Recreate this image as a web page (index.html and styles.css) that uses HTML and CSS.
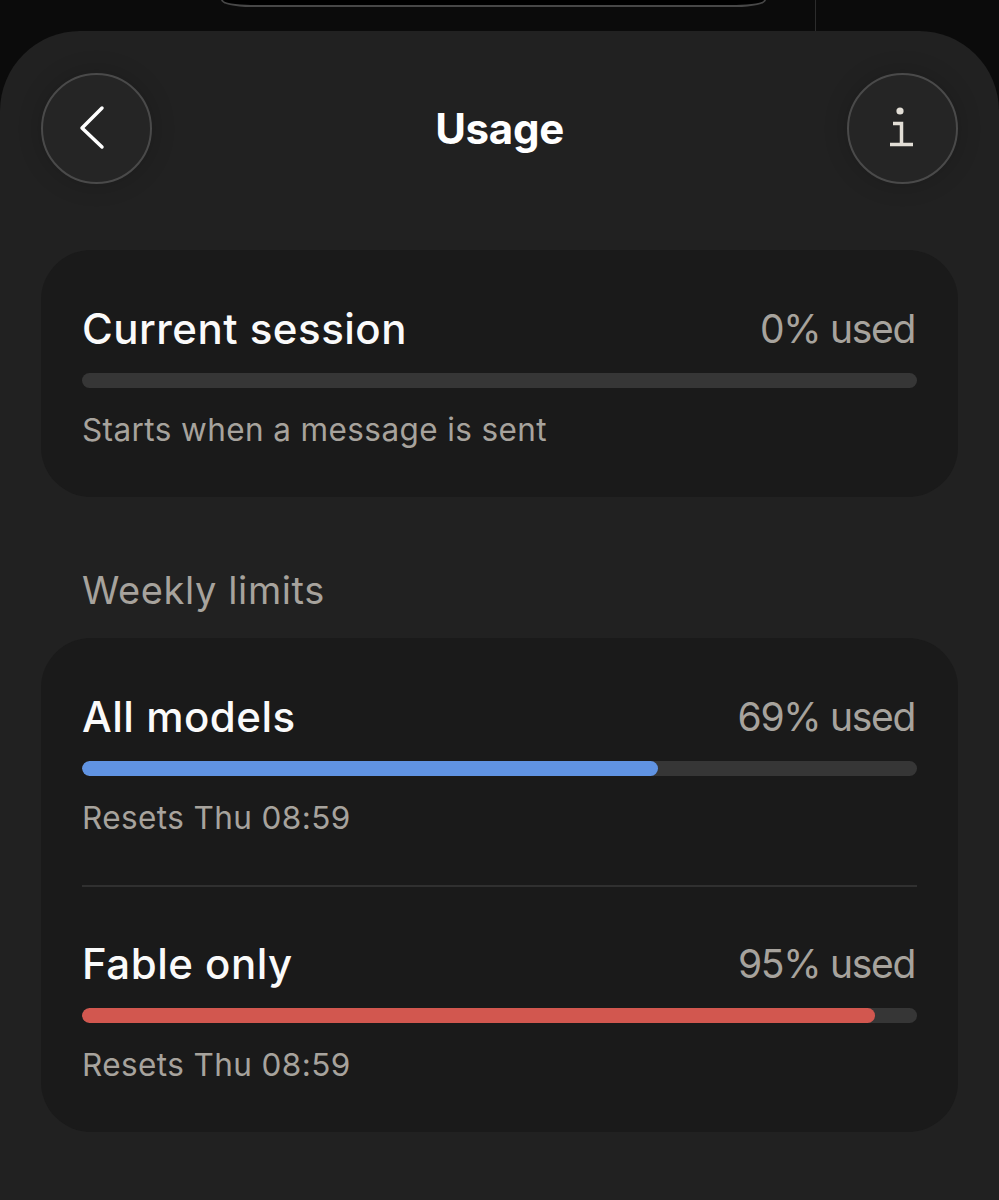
FILE: index.html
```html
<!DOCTYPE html>
<html lang="en">
<head>
  <meta charset="UTF-8">
  <meta name="viewport" content="width=device-width, initial-scale=1.0">
  <title>Usage</title>
  <link rel="stylesheet" href="styles.css">
</head>
<body>
  <div class="statusbar">
    <div class="island"></div>
    <div class="glare"></div>
  </div>

  <main class="sheet">
    <header class="topbar">
      <button class="round-btn" aria-label="Back">
        <svg viewBox="0 0 111 111" width="111" height="111">
          <polyline points="61,35 41,55 61,74" fill="none" stroke="#fff" stroke-width="3.5" stroke-linecap="round" stroke-linejoin="round"/>
        </svg>
      </button>
      <h1>Usage</h1>
      <button class="round-btn" aria-label="Info">
        <svg viewBox="0 0 111 111" width="111" height="111">
          <circle cx="53" cy="38" r="3.6" fill="#e2ded6"/>
          <path d="M46 50.5 H54.5 V71 M43 71.5 H66" fill="none" stroke="#e2ded6" stroke-width="3.5"/>
        </svg>
      </button>
    </header>

    <section class="card">
      <div class="limit">
        <div class="limit-head">
          <span class="limit-name">Current session</span>
          <span class="limit-used">0% used</span>
        </div>
        <div class="bar"><div class="fill" style="width: 0%"></div></div>
        <p class="limit-note">Starts when a message is sent</p>
      </div>
    </section>

    <h2 class="section-title">Weekly limits</h2>

    <section class="card">
      <div class="limit">
        <div class="limit-head">
          <span class="limit-name">All models</span>
          <span class="limit-used">69% used</span>
        </div>
        <div class="bar"><div class="fill blue" style="width: 69%"></div></div>
        <p class="limit-note">Resets Thu 08:59</p>
      </div>
      <hr class="divider">
      <div class="limit next">
        <div class="limit-head">
          <span class="limit-name">Fable only</span>
          <span class="limit-used">95% used</span>
        </div>
        <div class="bar"><div class="fill red" style="width: 95%"></div></div>
        <p class="limit-note">Resets Thu 08:59</p>
      </div>
    </section>
  </main>
</body>
</html>
```

FILE: styles.css
```css
body {
  margin: 0;
  background: #0b0b0b;
  font-family: Inter, "Open Sans", sans-serif;
  color: #fafafa;
  height: 1200px;
  overflow: hidden;
}

.statusbar {
  position: relative;
  height: 31px;
}

.island {
  width: 541px;
  height: 5px;
  margin-left: 221px;
  background: #000;
  border: 2px solid #474747;
  border-top: none;
  border-radius: 0 0 30px 30px / 0 0 7px 7px;
}

.glare {
  position: absolute;
  left: 815px;
  top: 0;
  width: 1px;
  height: 31px;
  background: #2c2c2c;
}

.sheet {
  min-height: 1169px;
  background: #212121;
  border-radius: 80px 80px 0 0;
  padding: 42px 41px 0;
  box-sizing: border-box;
}

.topbar {
  display: flex;
  justify-content: space-between;
  align-items: center;
  height: 111px;
}

.round-btn {
  width: 111px;
  height: 111px;
  padding: 0;
  border: 2px solid #4a4a4a;
  border-radius: 50%;
  background: #252525;
  box-shadow: 0 0 24px rgba(0, 0, 0, 0.18);
  display: flex;
  align-items: center;
  justify-content: center;
  overflow: hidden;
}

.round-btn svg {
  display: block;
  flex: none;
}

.topbar h1 {
  margin: 0;
  font-size: 42px;
  font-weight: 700;
  color: #fff;
  letter-spacing: -0.3px;
}

.card {
  background: #1a1a1a;
  border-radius: 50px;
  margin-top: 66px;
}

.limit {
  padding: 52px 41px 47px;
}

.limit.next {
  padding-top: 50px;
}

.limit-head {
  display: flex;
  justify-content: space-between;
  align-items: center;
  height: 52px;
}

.limit-name {
  font-size: 42px;
  font-weight: 500;
  letter-spacing: 0.5px;
  color: #fafafa;
}

.limit-used {
  font-size: 39px;
  font-weight: 400;
  letter-spacing: -1.3px;
  color: #a7a39d;
  margin-right: 2px;
}

.bar {
  height: 15px;
  margin-top: 19px;
  border-radius: 8px;
  background: #363636;
  overflow: hidden;
}

.fill {
  height: 100%;
  border-radius: 8px;
}

.fill.blue {
  background: #6093e2;
}

.fill.red {
  background: #d2574f;
}

.limit-note {
  margin: 22px 0 0;
  height: 40px;
  line-height: 40px;
  font-size: 31.5px;
  font-weight: 400;
  letter-spacing: 0.4px;
  color: #a7a39d;
}

.section-title {
  margin: 69px 41px 0;
  line-height: 48px;
  font-size: 38px;
  font-weight: 400;
  letter-spacing: 0.6px;
  color: #a7a39d;
}

.section-title + .card {
  margin-top: 24px;
}

.divider {
  margin: 0 41px;
  height: 2px;
  border: none;
  background: #303030;
}
```
